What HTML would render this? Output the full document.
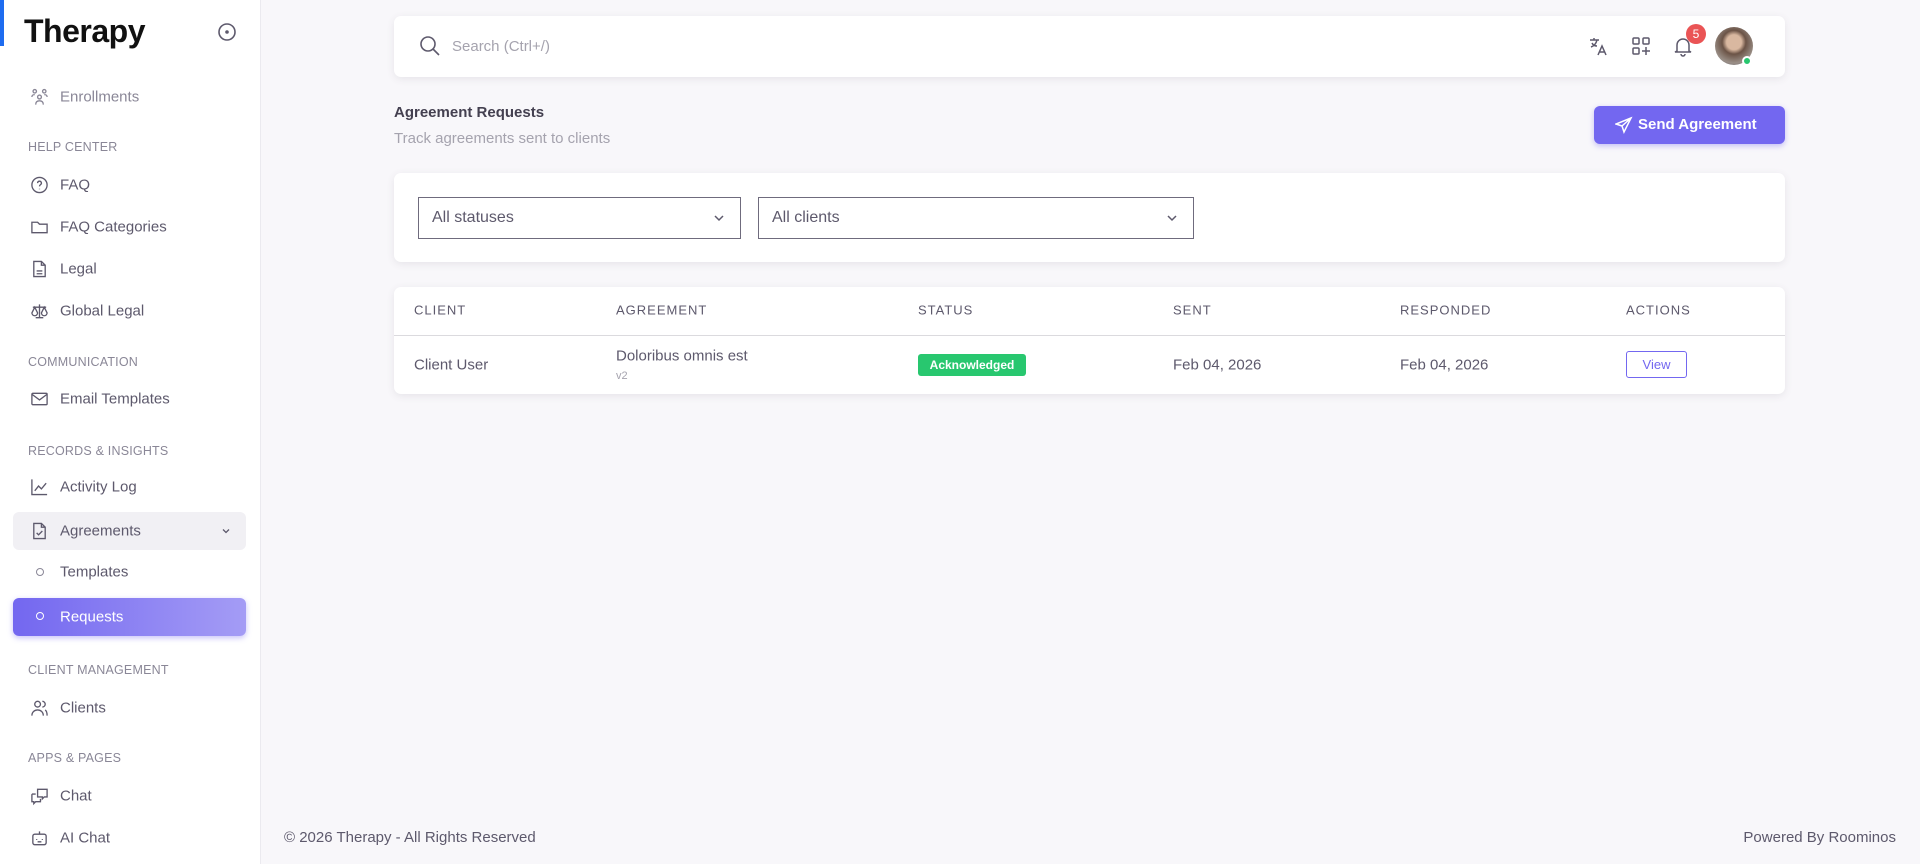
<!DOCTYPE html>
<html><head><meta charset="utf-8"><style>
*{box-sizing:border-box;margin:0;padding:0}
body{width:1920px;height:864px;overflow:hidden;background:#f8f7fa;font-family:"Liberation Sans",sans-serif;color:#5d596c;position:relative}
.sb{position:absolute;left:0;top:0;width:261px;height:864px;background:#fff;border-right:1px solid #ebeaef}
.abs{position:absolute}
.logo{left:24px;top:13px;font-size:32px;font-weight:bold;color:#111;letter-spacing:-0.5px}
.bar{left:0;top:0;width:4px;height:46px;background:#1e6cf0}
.it{position:absolute;left:60px;font-size:15px;color:#5d596c;transform:translateY(-50%)}
.ic{position:absolute;left:30px;width:19px;height:19px;transform:translateY(-50%)}
.sec{position:absolute;left:28px;font-size:12.5px;color:#8a8797;transform:translateY(-50%);letter-spacing:.2px}
.card{position:absolute;background:#fff;border-radius:7px;box-shadow:0 2px 8px rgba(75,70,92,.1)}
.th{position:absolute;top:310px;font-size:13px;color:#5d596c;letter-spacing:1px;transform:translateY(-50%)}
.td{position:absolute;top:365px;font-size:15px;color:#5d596c;transform:translateY(-50%)}
.sel{position:absolute;top:197px;height:42px;border:1px solid #6f6b7d;background:#fff;font-size:16px;color:#5d596c;padding:11px 13px}
</style></head><body>
<div class="sb">
<div class="abs bar"></div>
<div class="abs logo">Therapy</div>
<svg class="abs" style="left:217px;top:22px" width="20" height="20" viewBox="0 0 20 20"><circle cx="10" cy="10" r="8" fill="none" stroke="#5d596c" stroke-width="1.6"/><circle cx="10" cy="10" r="1.8" fill="#5d596c"/></svg>

<svg class="ic" style="top:97px" viewBox="0 0 20 20" fill="none" stroke="#8a8797" stroke-width="1.4"><circle cx="5" cy="4" r="1.8"/><circle cx="15" cy="4" r="1.8"/><circle cx="10" cy="10" r="2"/><path d="M6 18c0-3 2-4 4-4s4 1 4 4M2 10c0-2 1-2.5 3-2.5M18 10c0-2-1-2.5-3-2.5"/></svg>
<div class="it" style="top:97px;color:#8a8797">Enrollments</div>
<div class="sec" style="top:147px">HELP CENTER</div>
<svg class="ic" style="top:185px" viewBox="0 0 20 20" fill="none" stroke="#5d596c" stroke-width="1.4"><circle cx="10" cy="10" r="8"/><path d="M8 8a2 2 0 1 1 3 1.7c-.8.5-1 1-1 1.8M10 14v.5"/></svg>
<div class="it" style="top:185px">FAQ</div>
<svg class="ic" style="top:227px" viewBox="0 0 20 20" fill="none" stroke="#5d596c" stroke-width="1.4"><path d="M2 5h6l2 2h8v9H2z"/></svg>
<div class="it" style="top:227px">FAQ Categories</div>
<svg class="ic" style="top:269px" viewBox="0 0 20 20" fill="none" stroke="#5d596c" stroke-width="1.4"><path d="M4 2h8l4 4v12H4zM12 2v4h4M7 12h6M7 15h6"/></svg>
<div class="it" style="top:269px">Legal</div>
<svg class="ic" style="top:311px" viewBox="0 0 20 20" fill="none" stroke="#5d596c" stroke-width="1.4"><path d="M10 3v14M6 17h8M3 6h14M5 6l-3 6a3 3 0 0 0 6 0zM15 6l-3 6a3 3 0 0 0 6 0z"/></svg>
<div class="it" style="top:311px">Global Legal</div>
<div class="sec" style="top:362px">COMMUNICATION</div>
<svg class="ic" style="top:399px" viewBox="0 0 20 20" fill="none" stroke="#5d596c" stroke-width="1.4"><rect x="2" y="4" width="16" height="12" rx="1"/><path d="M2 5l8 6 8-6"/></svg>
<div class="it" style="top:399px">Email Templates</div>
<div class="sec" style="top:451px">RECORDS &amp; INSIGHTS</div>
<svg class="ic" style="top:487px" viewBox="0 0 20 20" fill="none" stroke="#5d596c" stroke-width="1.4"><path d="M2 2v16h16M5 14l4-5 3 3 5-6"/></svg>
<div class="it" style="top:487px">Activity Log</div>
<div class="abs" style="left:13px;top:512px;width:233px;height:38px;background:#f1f0f4;border-radius:6px"></div>
<svg class="ic" style="top:531px" viewBox="0 0 20 20" fill="none" stroke="#5d596c" stroke-width="1.4"><path d="M4 2h8l4 4v12H4zM12 2v4h4M7 12l2 2 4-4"/></svg>
<div class="it" style="top:531px">Agreements</div>
<svg class="abs" style="left:221px;top:526px" width="10" height="10" viewBox="0 0 10 10" fill="none" stroke="#5d596c" stroke-width="1.3"><path d="M2 3.5l3 3 3-3"/></svg>
<div class="abs" style="left:36px;top:568px;width:8px;height:8px;border:1.5px solid #8a8797;border-radius:50%"></div>
<div class="it" style="top:572px">Templates</div>
<div class="abs" style="left:13px;top:598px;width:233px;height:38px;background:linear-gradient(90deg,#7367f0,#a49cf5);border-radius:6px;box-shadow:0 2px 6px rgba(115,103,240,.4)"></div>
<div class="abs" style="left:36px;top:612px;width:8px;height:8px;border:1.5px solid #fff;border-radius:50%"></div>
<div class="it" style="top:617px;color:#fff">Requests</div>
<div class="sec" style="top:670px">CLIENT MANAGEMENT</div>
<svg class="ic" style="top:708px" viewBox="0 0 20 20" fill="none" stroke="#5d596c" stroke-width="1.4"><circle cx="8" cy="6" r="3"/><path d="M2 18c0-4 3-6 6-6s6 2 6 6M13 3a3 3 0 0 1 0 6M16 12c1.5 1 2 3 2 6"/></svg>
<div class="it" style="top:708px">Clients</div>
<div class="sec" style="top:758px">APPS &amp; PAGES</div>
<svg class="ic" style="top:796px" viewBox="0 0 20 20" fill="none" stroke="#5d596c" stroke-width="1.4"><path d="M8 3h10v8h-3l-2 2v-2H8zM2 8h4M2 8v8h2v2l2-2h5v-3"/></svg>
<div class="it" style="top:796px">Chat</div>
<svg class="ic" style="top:838px" viewBox="0 0 20 20" fill="none" stroke="#5d596c" stroke-width="1.4"><rect x="3" y="6" width="14" height="11" rx="2"/><path d="M10 6V3M7 11v1M13 11v1M8 14h4"/></svg>
<div class="it" style="top:838px">AI Chat</div>
</div>

<div class="card" style="left:394px;top:16px;width:1391px;height:61px"></div>
<svg class="abs" style="left:418px;top:34px" width="24" height="24" viewBox="0 0 24 24" fill="none" stroke="#5d596c" stroke-width="1.6"><circle cx="10" cy="10" r="7"/><path d="M15 15l6 6"/></svg>
<div class="abs" style="left:452px;top:38px;font-size:15px;color:#a5a3ae">Search (Ctrl+/)</div>
<svg class="abs" style="left:1587px;top:35px" width="22" height="22" viewBox="0 0 22 22" fill="none" stroke="#5d596c" stroke-width="1.5"><path d="M3 5h9M7 3v2M10 5c-1 4-3 6-6 7M5 8c1 2 3 3 5 3M11 20l4-9 4 9M12.5 17h5"/></svg>
<svg class="abs" style="left:1630px;top:35px" width="22" height="22" viewBox="0 0 22 22" fill="none" stroke="#5d596c" stroke-width="1.5"><rect x="3" y="3" width="6" height="6" rx="1"/><rect x="13" y="3" width="6" height="6" rx="1"/><rect x="3" y="13" width="6" height="6" rx="1"/><path d="M16 12v8M12 16h8"/></svg>
<svg class="abs" style="left:1672px;top:35px" width="22" height="22" viewBox="0 0 22 22" fill="none" stroke="#5d596c" stroke-width="1.5"><path d="M5 16V10a6 6 0 0 1 12 0v6l2 1H3zM9 19a2 2 0 0 0 4 0"/></svg>
<div class="abs" style="left:1686px;top:24px;width:20px;height:20px;border-radius:50%;background:#ea5455;color:#fff;font-size:12px;text-align:center;line-height:20px">5</div>
<div class="abs" style="left:1715px;top:27px;width:38px;height:38px;border-radius:50%;background:radial-gradient(circle at 50% 40%,#d9b8a0 0 25%,#6b5346 40%,#9a8f87 70%,#556 100%)"></div>
<div class="abs" style="left:1742px;top:56px;width:10px;height:10px;border-radius:50%;background:#28c76f;border:2px solid #fff"></div>

<div class="abs" style="left:394px;top:104px;font-size:15px;font-weight:bold;color:#444050">Agreement Requests</div>
<div class="abs" style="left:394px;top:130px;font-size:15px;color:#a5a3ae">Track agreements sent to clients</div>
<div class="abs" style="left:1594px;top:106px;width:191px;height:38px;background:#7367f0;border-radius:6px;box-shadow:0 2px 6px rgba(115,103,240,.4);color:#fff;font-size:15px;font-weight:bold;line-height:38px;padding-left:44px">Send Agreement</div>
<svg class="abs" style="left:1615px;top:116px" width="18" height="18" viewBox="0 0 18 18" fill="none" stroke="#fff" stroke-width="1.5"><path d="M16 2L1 8l6 2 2 6zM16 2L7 10"/></svg>

<div class="card" style="left:394px;top:173px;width:1391px;height:89px"></div>
<div class="sel" style="left:418px;width:323px">All statuses</div>
<svg class="abs" style="left:712px;top:211px" width="14" height="14" viewBox="0 0 14 14" fill="none" stroke="#5d596c" stroke-width="1.5"><path d="M3 5l4 4 4-4"/></svg>
<div class="sel" style="left:758px;width:436px">All clients</div>
<svg class="abs" style="left:1165px;top:211px" width="14" height="14" viewBox="0 0 14 14" fill="none" stroke="#5d596c" stroke-width="1.5"><path d="M3 5l4 4 4-4"/></svg>

<div class="card" style="left:394px;top:287px;width:1391px;height:107px"></div>
<div class="abs" style="left:394px;top:335px;width:1391px;height:1px;background:#dbdade"></div>
<div class="th" style="left:414px">CLIENT</div>
<div class="th" style="left:616px">AGREEMENT</div>
<div class="th" style="left:918px">STATUS</div>
<div class="th" style="left:1173px">SENT</div>
<div class="th" style="left:1400px">RESPONDED</div>
<div class="th" style="left:1626px">ACTIONS</div>
<div class="td" style="left:414px">Client User</div>
<div class="td" style="left:616px;top:356px">Doloribus omnis est</div>
<div class="td" style="left:616px;top:376px;font-size:11px;color:#a5a3ae">v2</div>
<div class="abs" style="left:918px;top:354px;width:108px;height:22px;background:#28c76f;border-radius:3px;color:#fff;font-size:12px;font-weight:bold;text-align:center;line-height:22px">Acknowledged</div>
<div class="td" style="left:1173px">Feb 04, 2026</div>
<div class="td" style="left:1400px">Feb 04, 2026</div>
<div class="abs" style="left:1626px;top:351px;width:61px;height:27px;border:1px solid #7367f0;border-radius:3px;color:#7367f0;font-size:13px;text-align:center;line-height:25px">View</div>

<div class="abs" style="left:284px;top:829px;font-size:15px;color:#5d596c">© 2026 Therapy - All Rights Reserved</div>
<div class="abs" style="right:24px;top:829px;font-size:15px;color:#5d596c">Powered By Roominos</div>
</body></html>
